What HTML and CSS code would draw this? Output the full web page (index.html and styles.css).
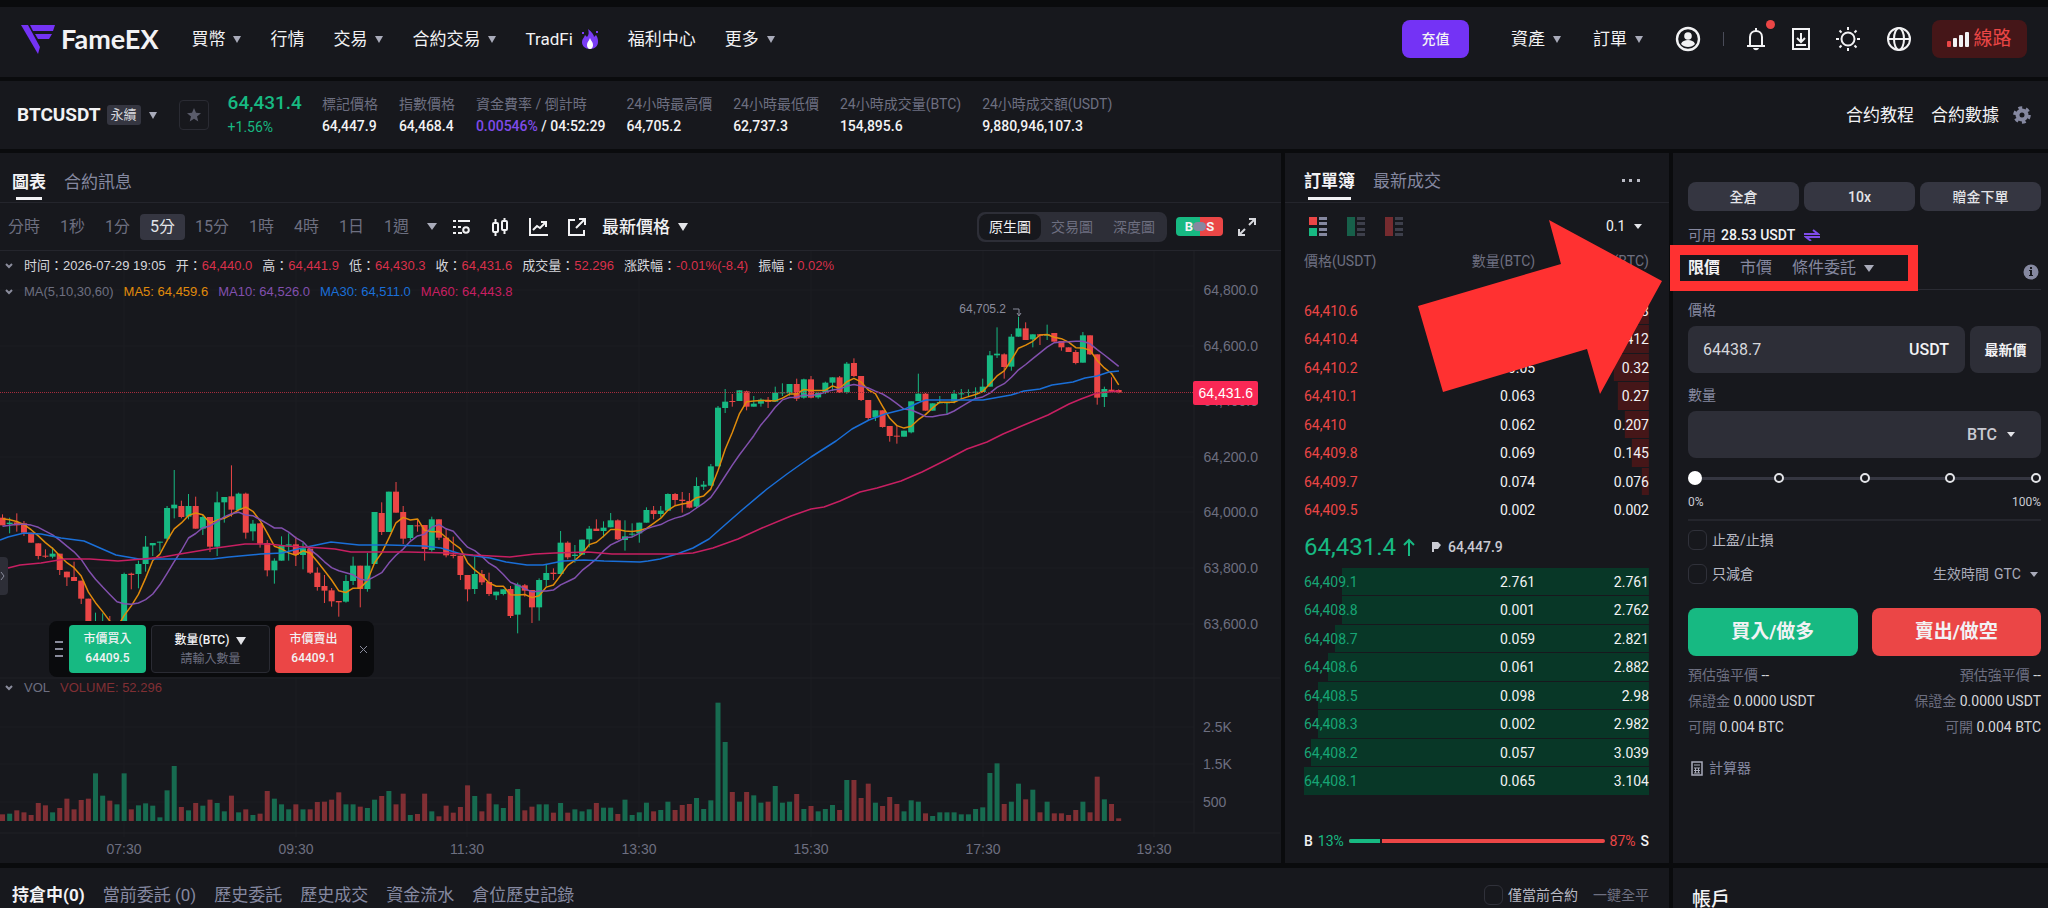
FILE: index.html
```html
<!DOCTYPE html>
<html lang="zh-Hant">

<head>
    <meta charset="UTF-8">
    <meta name="viewport" content="width=device-width,initial-scale=1">
    <title>BTCUSDT 永續 | FameEX</title>
    <link rel="stylesheet" href="styles.css">
</head>

<body>
    <header class="header">
        <a class="logo" href="#">
            <svg width="34" height="30" viewBox="0 0 34 30" fill="#7433f5">
                <path d="M0 1h7l12 22-2 7z" />
                <path d="M9 1h25l-2 6H12z" />
                <path d="M14 10h17l-3 5H17z" />
            </svg>
            <span>FameEX</span>
        </a>
        <nav class="main_nav">
            <a href="#">買幣<i class="caret"></i></a>
            <a href="#">行情</a>
            <a href="#">交易<i class="caret"></i></a>
            <a href="#">合約交易<i class="caret"></i></a>
            <a href="#">TradFi
                <svg width="18" height="20" viewBox="0 0 18 20">
                    <path fill="#7a3cf5" d="M7 0c4 3 6 6 6 8l2-2c2 3 2 5 2 7 0 4-3 7-8 7s-8-3-8-7c0-3 2-4 3-7l2 2c2-2 2-5 1-8z" />
                    <path fill="#fff" d="M9 9c1 3 3 4 3 7 0 2-1 4-3 4s-3-2-3-4c0-3 2-4 3-7z" />
                    <path fill="#7a3cf5" d="M15 2h2v2h-2zM1 3h2v2H1z" />
                </svg>
            </a>
            <a href="#">福利中心</a>
            <a href="#">更多<i class="caret"></i></a>
        </nav>
        <div class="header_right">
            <button class="btn_deposit">充值</button>
            <a class="menu" href="#">資產<i class="caret"></i></a>
            <a class="menu" href="#">訂單<i class="caret"></i></a>
            <div class="header_icons">
                <svg width="26" height="26" viewBox="0 0 26 26" fill="none" stroke="#f2f2f4" stroke-width="2.4">
                    <circle cx="13" cy="13" r="11" />
                    <circle cx="13" cy="10" r="3.8" fill="#f2f2f4" stroke="none" />
                    <path d="M6 18c1-3 4-4 7-4s6 1 7 4c-3 4-11 4-14 0z" fill="#f2f2f4" stroke="none" />
                </svg>
                <i class="split"></i>
                <span class="bell">
                    <svg width="20" height="24" viewBox="0 0 20 24" fill="none" stroke="#f2f2f4" stroke-width="2">
                        <path d="M1 19h18M4 19v-9c0-4 3-6 6-6s6 2 6 6v9M10 1v3" />
                        <path d="M7 21h6c-1 3-5 3-6 0z" fill="#f2f2f4" stroke="none" />
                    </svg>
                    <i class="dot"></i>
                </span>
                <svg width="18" height="24" viewBox="0 0 18 24" fill="none" stroke="#f2f2f4" stroke-width="2">
                    <path d="M1 2h16v20H1zM9 6v9M5 11l4 4 4-4M4 18h10" />
                </svg>
                <svg width="24" height="24" viewBox="0 0 24 24" fill="none" stroke="#f2f2f4" stroke-width="2">
                    <circle cx="12" cy="12" r="6.5" />
                    <path d="M12 0v3M12 21v3M0 12h3M21 12h3M3.5 3.5l2 2M18.500 18.500l2 2M3.500 20.500l2-2M18.500 5.500l2-2" />
                </svg>
                <svg width="26" height="26" viewBox="0 0 26 26" fill="none" stroke="#f2f2f4" stroke-width="2">
                    <circle cx="13" cy="13" r="11" />
                    <ellipse cx="13" cy="13" rx="5" ry="11" />
                    <path d="M2 13h22" />
                </svg>
            </div>
            <button class="btn_line">
                <svg width="23" height="16" viewBox="0 0 23 16" fill="#f2f2f4">
                    <rect x="0" y="10" width="4" height="6" rx="1" fill="#eb4646" />
                    <rect x="6" y="7" width="4" height="9" rx="1" />
                    <rect x="12" y="4" width="4" height="12" rx="1" />
                    <rect x="18" y="1" width="4" height="15" rx="1" />
                </svg>
                線路
            </button>
        </div>
    </header>

    <section class="ticker">
        <div class="symbol">
            <b>BTCUSDT</b>
            <span class="tag">永續</span>
            <i class="caret"></i>
            <button class="btn_star" aria-label="收藏">
                <svg width="14" height="14" viewBox="0 0 14 14" fill="#5a5c6b">
                    <path d="M7 0l2 4.700 5 .5-4 3.300 1.300 5L7 10.800l-4.300 2.700 1.300-5-4-3.300 5-.5z" />
                </svg>
            </button>
        </div>
        <div class="last_price">
            <b>64,431.4</b>
            <span>+1.56%</span>
        </div>
        <dl class="stats">
            <div><dt>標記價格</dt><dd>64,447.9</dd></div>
            <div><dt>指數價格</dt><dd>64,468.4</dd></div>
            <div><dt>資金費率 / 倒計時</dt><dd><em>0.00546%</em> / 04:52:29</dd></div>
            <div><dt>24小時最高價</dt><dd>64,705.2</dd></div>
            <div><dt>24小時最低價</dt><dd>62,737.3</dd></div>
            <div><dt>24小時成交量(BTC)</dt><dd>154,895.6</dd></div>
            <div><dt>24小時成交額(USDT)</dt><dd>9,880,946,107.3</dd></div>
        </dl>
        <div class="ticker_right">
            <a href="#">合约教程</a>
            <a href="#">合約數據</a>
            <svg width="18" height="18" viewBox="0 0 18 18" fill="none" stroke="#8588a0">
                <circle cx="9" cy="9" r="4.500" stroke-width="4" />
                <circle cx="9" cy="9" r="7.300" stroke-width="3" stroke-dasharray="3.820 3.820" />
            </svg>
        </div>
    </section>

    <main class="main">
        <section class="panel chart">
            <div class="tabs">
                <button class="on">圖表</button>
                <button>合約訊息</button>
            </div>
            <div class="toolbar">
                <div class="periods">
                    <button>分時</button>
                    <button>1秒</button>
                    <button>1分</button>
                    <button class="on">5分</button>
                    <button>15分</button>
                    <button>1時</button>
                    <button>4時</button>
                    <button>1日</button>
                    <button>1週</button>
                </div>
                <i class="caret big"></i>
                <div class="tools">
                    <svg width="18" height="16" viewBox="0 0 18 16" fill="none" stroke="#f2f2f4" stroke-width="2">
                        <path d="M0 2h3M5 2h12M0 8h3M5 8h3M0 14h3M5 14h4" />
                        <circle cx="13" cy="11" r="2.800" />
                    </svg>
                    <svg width="18" height="18" viewBox="0 0 18 18" fill="none" stroke="#f2f2f4" stroke-width="2">
                        <path d="M4.500 1v4M4.500 14v4M13.500 0v3M13.500 12v4" />
                        <rect x="2" y="5" width="5" height="9" rx="1" />
                        <rect x="11" y="3" width="5" height="9" rx="1" />
                    </svg>
                    <svg width="19" height="18" viewBox="0 0 19 18" fill="none" stroke="#f2f2f4" stroke-width="2">
                        <path d="M1 0v17h18M4 12l4-4 3 2 6-6M12 4h5v5" />
                    </svg>
                    <svg width="18" height="18" viewBox="0 0 18 18" fill="none" stroke="#f2f2f4" stroke-width="2">
                        <path d="M7 2H1v15h15v-5M11 1h6v6M17 1L8 10" />
                    </svg>
                </div>
                <label class="pick strong">
                    <select aria-label="價格類型">
                        <option>最新價格</option>
                    </select>
                    <i class="caret light"></i>
                </label>
                <div class="seg">
                    <button class="on">原生圖</button>
                    <button>交易圖</button>
                    <button>深度圖</button>
                </div>
                <button class="bs" aria-label="買賣點"><b>B</b><i></i><b>S</b></button>
                <svg width="18" height="18" viewBox="0 0 18 18" fill="none" stroke="#d6d7dc" stroke-width="2">
                    <path d="M11 1h6v6M17 1l-6 6M1 11v6h6M1 17l6-6" />
                </svg>
            </div>
            <div class="plot">
                <svg class="kline" id="kline" viewBox="0 0 1280 612" preserveAspectRatio="xMinYMin meet"></svg>
                <div class="legend">
                    <p>
                        <svg width="9" height="6" viewBox="0 0 9 6"><path d="M1 1l3 3 3-3" /></svg>
                        <span>时间：2026-07-29 19:05</span>
                        <span>开：<em>64,440.0</em></span>
                        <span>高：<em>64,441.9</em></span>
                        <span>低：<em>64,430.3</em></span>
                        <span>收：<em>64,431.6</em></span>
                        <span>成交量：<em>52.296</em></span>
                        <span>涨跌幅：<em>-0.01%(-8.4)</em></span>
                        <span>振幅：<em>0.02%</em></span>
                    </p>
                    <p>
                        <svg width="9" height="6" viewBox="0 0 9 6"><path d="M1 1l3 3 3-3" /></svg>
                        <span class="muted">MA(5,10,30,60)</span>
                        <span class="ma5">MA5: 64,459.6</span>
                        <span class="ma10">MA10: 64,526.0</span>
                        <span class="ma30">MA30: 64,511.0</span>
                        <span class="ma60">MA60: 64,443.8</span>
                    </p>
                </div>
                <div class="legend vol">
                    <p>
                        <svg width="9" height="6" viewBox="0 0 9 6"><path d="M1 1l3 3 3-3" /></svg>
                        <span class="muted">VOL</span>
                        <span class="volume">VOLUME: 52.296</span>
                    </p>
                </div>
                <button class="drawer" aria-label="展開">
                    <svg width="6" height="10" viewBox="0 0 6 10" fill="none" stroke="#8a8c9c"><path d="M1 1l3 4-3 4" /></svg>
                </button>
                <div class="quick">
                    <i class="grip"></i>
                    <button class="buy">市價買入<span>64409.5</span></button>
                    <div class="quick_qty">
                        <label for="quick_qty">數量(BTC)<i class="caret light"></i></label>
                        <input id="quick_qty" type="text" placeholder="請輸入數量">
                    </div>
                    <button class="sell">市價賣出<span>64409.1</span></button>
                    <button class="close" aria-label="關閉">
                        <svg width="9" height="9" viewBox="0 0 9 9" stroke="#8a8c9c"><path d="M1 1l7 7M8 1L1 8" /></svg>
                    </button>
                </div>
            </div>
        </section>

        <section class="panel book">
            <div class="tabs">
                <button class="on">訂單簿</button>
                <button>最新成交</button>
                <svg class="more" width="18" height="4" viewBox="0 0 18 4" fill="#b9bac4">
                    <path d="M0 0h3v3H0zM7 0h3v3H7zM15 0h3v3h-3z" />
                </svg>
            </div>
            <div class="book_bar">
                <svg width="18" height="19" viewBox="0 0 18 19">
                    <path fill="#eb4646" d="M0 0h8v8H0z" />
                    <path fill="#17b982" d="M0 11h8v8H0z" />
                    <path fill="#8588a0" d="M10 0h8v3h-8zM10 5h8v3h-8zM10 11h8v3h-8zM10 16h8v3h-8z" />
                </svg>
                <svg width="18" height="19" viewBox="0 0 18 19">
                    <path fill="#17604a" d="M0 0h8v19H0z" />
                    <path fill="#3d3f4b" d="M10 0h8v3h-8zM10 5h8v3h-8zM10 11h8v3h-8zM10 16h8v3h-8z" />
                </svg>
                <svg width="18" height="19" viewBox="0 0 18 19">
                    <path fill="#762b2f" d="M0 0h8v19H0z" />
                    <path fill="#3d3f4b" d="M10 0h8v3h-8zM10 5h8v3h-8zM10 11h8v3h-8zM10 16h8v3h-8z" />
                </svg>
                <label class="pick">
                    <select aria-label="深度">
                        <option>0.1</option>
                    </select>
                    <i class="caret light small"></i>
                </label>
            </div>
            <table class="depth asks">
                <thead>
                    <tr><th>價格(USDT)</th><th>數量(BTC)</th><th>合計(BTC)</th></tr>
                </thead>
                <tbody>
                    <tr style="--w:13%"><td>64,410.6</td><td>0.001</td><td>0.413</td></tr>
                    <tr style="--w:13%"><td>64,410.4</td><td>0.092</td><td>0.412</td></tr>
                    <tr style="--w:10%"><td>64,410.2</td><td>0.05</td><td>0.32</td></tr>
                    <tr style="--w:9%"><td>64,410.1</td><td>0.063</td><td>0.27</td></tr>
                    <tr style="--w:7%"><td>64,410</td><td>0.062</td><td>0.207</td></tr>
                    <tr style="--w:5%"><td>64,409.8</td><td>0.069</td><td>0.145</td></tr>
                    <tr style="--w:2%"><td>64,409.7</td><td>0.074</td><td>0.076</td></tr>
                    <tr style="--w:0%"><td>64,409.5</td><td>0.002</td><td>0.002</td></tr>
                </tbody>
            </table>
            <div class="book_price">
                <b>64,431.4</b>
                <svg width="12" height="18" viewBox="0 0 12 18" fill="none" stroke="#17b982" stroke-width="2"><path d="M6 18V2M1 7l5-5 5 5" /></svg>
                <svg class="flag" width="9" height="10" viewBox="0 0 9 10" fill="#c9cad2"><path d="M0 0h6l3 3-3 4H2v3H0z" /></svg>
                <span>64,447.9</span>
            </div>
            <table class="depth bids">
                <tbody>
                    <tr style="--w:89%"><td>64,409.1</td><td>2.761</td><td>2.761</td></tr>
                    <tr style="--w:89%"><td>64,408.8</td><td>0.001</td><td>2.762</td></tr>
                    <tr style="--w:91%"><td>64,408.7</td><td>0.059</td><td>2.821</td></tr>
                    <tr style="--w:93%"><td>64,408.6</td><td>0.061</td><td>2.882</td></tr>
                    <tr style="--w:96%"><td>64,408.5</td><td>0.098</td><td>2.98</td></tr>
                    <tr style="--w:96%"><td>64,408.3</td><td>0.002</td><td>2.982</td></tr>
                    <tr style="--w:98%"><td>64,408.2</td><td>0.057</td><td>3.039</td></tr>
                    <tr style="--w:100%"><td>64,408.1</td><td>0.065</td><td>3.104</td></tr>
                </tbody>
            </table>
            <div class="ratio">
                <b>B</b>
                <span class="up">13%</span>
                <div class="ratio_bar"><i style="width:13%"></i></div>
                <span class="down">87%</span>
                <b>S</b>
            </div>
        </section>

        <section class="panel order">
            <div class="modes">
                <button>全倉</button>
                <button>10x</button>
                <button>贈金下單</button>
            </div>
            <p class="avail">可用 <b>28.53 USDT</b>
                <svg width="16" height="12" viewBox="0 0 16 12" fill="none" stroke="#7f4bea" stroke-width="2"><path d="M0 5h14l-5-4M16 8H2l5 4" /></svg>
            </p>
            <div class="types">
                <button class="on">限價</button>
                <button>市價</button>
                <button>條件委託<i class="caret big"></i></button>
                <svg width="16" height="16" viewBox="0 0 16 16">
                    <circle cx="8" cy="8" r="7.500" fill="#8588a0" />
                    <path fill="#17181d" d="M7 3h2v2H7zM6 6h3v5h1v1H6v-1h1V7H6z" />
                </svg>
            </div>
            <label class="field_name" for="price">價格</label>
            <div class="price_row">
                <div class="field">
                    <input id="price" type="text" value="64438.7">
                    <b>USDT</b>
                </div>
                <button>最新價</button>
            </div>
            <label class="field_name" for="amount">數量</label>
            <div class="field">
                <input id="amount" type="text">
                <label class="pick">
                    <select aria-label="單位">
                        <option>BTC</option>
                    </select>
                    <i class="caret light small"></i>
                </label>
            </div>
            <div class="slider">
                <input type="range" min="0" max="100" value="0" aria-label="倉位比例">
                <div class="marks"><i></i><i></i><i></i><i></i><i></i></div>
            </div>
            <div class="slider_text"><span>0%</span><span>100%</span></div>
            <div class="options">
                <label class="check"><input type="checkbox">止盈/止損</label>
                <div class="options_row">
                    <label class="check"><input type="checkbox">只減倉</label>
                    <label class="pick tif">生效時間
                        <select>
                            <option>GTC</option>
                        </select>
                        <i class="caret small"></i>
                    </label>
                </div>
            </div>
            <div class="submit">
                <button class="buy">買入/做多</button>
                <button class="sell">賣出/做空</button>
            </div>
            <div class="cost">
                <div>
                    <p>預估強平價 <span>--</span></p>
                    <p>保證金 <span>0.0000 USDT</span></p>
                    <p>可開 <span>0.004 BTC</span></p>
                </div>
                <div>
                    <p>預估強平價 <span>--</span></p>
                    <p>保證金 <span>0.0000 USDT</span></p>
                    <p>可開 <span>0.004 BTC</span></p>
                </div>
            </div>
            <a class="calc" href="#">
                <svg width="12" height="15" viewBox="0 0 12 15" fill="none" stroke="#a9abba">
                    <path stroke-width="1.500" d="M1 1h10v13H1z" />
                    <path d="M3 4h6M3 7h6M3 9.500h6M3 12h6M4.500 7v5M7.500 7v5" />
                </svg>
                計算器
            </a>
        </section>

        <section class="panel positions">
            <div class="tabs">
                <button class="on">持倉中(0)</button>
                <button>當前委託 (0)</button>
                <button>歷史委託</button>
                <button>歷史成交</button>
                <button>資金流水</button>
                <button>倉位歷史記錄</button>
            </div>
            <label class="check"><input type="checkbox">僅當前合約</label>
            <a href="#">一鍵全平</a>
        </section>

        <section class="panel account">
            <h2>帳戶</h2>
        </section>

        <!-- guide marks over the order type tabs -->
        <div class="guide_box"></div>
        <svg class="guide_arrow" width="245" height="175" viewBox="0 0 245 175">
            <path fill="#ff3131" d="M131 0l113 61-62 113-13-45L25 172 0 86l143-42z" />
        </svg>
    </main>
    <script src="chart.js"></script>
</body>

</html>
```

FILE: styles.css
```css
* {
    margin: 0;
    padding: 0;
    box-sizing: border-box;
}

html {
    font-size: 14px;
    font-family: Roboto, "Noto Sans CJK TC", sans-serif;
    background: #0a0b0d;
    color: #f2f2f4;
}

body {
    height: 100vh;
    padding-top: 7px;
    overflow: hidden;
    line-height: 20px;
}

a {
    color: inherit;
    text-decoration: none;
}

button,
input,
select {
    border: 0;
    background: none;
    color: inherit;
    font: inherit;
    outline: none;
    appearance: none;
}

button {
    cursor: pointer;
    white-space: nowrap;
}

svg {
    display: block;
    flex: none;
}

b {
    font-weight: 500;
}

em {
    font-style: normal;
}

.caret {
    display: inline-block;
    flex: none;
    border: 0 solid transparent;
    border-width: 7px 4px 0;
    border-top-color: #a9abba;
}

.caret.big {
    border-width: 7px 5px 0;
}

.caret.small {
    border-width: 5px 4px 0;
}

.caret.light {
    border-top-color: #e3e4e8;
}

.pick {
    display: flex;
    align-items: center;
    gap: 8px;
}

/* header */

.header {
    height: 70px;
    margin-bottom: 4px;
    padding: 0 21px 6px;
    background: #17181d;
    display: flex;
    align-items: center;
    font-size: 17px;
}

.logo {
    display: flex;
    align-items: center;
    gap: 6px;
    font: 700 27px/30px Lato, sans-serif;
    margin-right: 33px;
}

.main_nav {
    display: flex;
    gap: 29px;
    white-space: nowrap;
}

.main_nav a,
.menu {
    display: flex;
    align-items: center;
    gap: 8px;
}

.header_right {
    display: flex;
    align-items: center;
    margin-left: auto;
    white-space: nowrap;
}

.btn_deposit {
    width: 67px;
    height: 38px;
    border-radius: 8px;
    background: #7433f5;
    font-size: 14px;
    font-weight: 500;
    margin-right: 42px;
}

.menu {
    margin-right: 32px;
}

.header_icons {
    display: flex;
    align-items: center;
    gap: 26px;
    margin-right: 20px;
}

.split {
    width: 1px;
    height: 14px;
    background: #4a4c59;
    margin: 0 -4px;
}

.bell {
    position: relative;
}

.dot {
    position: absolute;
    right: -9px;
    top: -7px;
    width: 9px;
    height: 9px;
    border-radius: 50%;
    background: #eb4646;
}

.btn_line {
    display: flex;
    align-items: center;
    justify-content: center;
    gap: 3px;
    width: 95px;
    height: 38px;
    border-radius: 8px;
    background: #451618;
    color: #eb4646;
    font-size: 19px;
}

/* ticker */

.ticker {
    height: 68px;
    margin-bottom: 4px;
    padding: 0 17px;
    background: #17181d;
    display: flex;
    align-items: center;
    white-space: nowrap;
}

.symbol {
    display: flex;
    align-items: center;
    gap: 6px;
    font-size: 19px;
}

.symbol b {
    font-weight: 700;
}

.symbol .caret {
    margin: 0 2px;
}

.tag {
    padding: 0 4px;
    border-radius: 3px;
    background: #353641;
    color: #d6d7dc;
    font-size: 13px;
}

.btn_star {
    display: flex;
    align-items: center;
    justify-content: center;
    width: 30px;
    height: 30px;
    margin-left: 14px;
    border: 1px solid #2a2b33;
    border-radius: 4px;
}

.last_price {
    margin: 0 20px 0 19px;
    color: #17b982;
    line-height: 25px;
}

.last_price b {
    display: block;
    font-size: 19px;
}

.stats {
    display: flex;
    gap: 21px;
    line-height: 22px;
}

.stats dt {
    color: #6d6f80;
}

.stats dd {
    font-weight: 500;
}

.stats em {
    color: #7f4bea;
}

.ticker_right {
    display: flex;
    align-items: center;
    gap: 17px;
    margin-left: auto;
    font-size: 17px;
}

.ticker_right svg {
    margin-left: -3px;
}

/* main grid */

.main {
    position: relative;
    display: grid;
    grid-template-columns: 1fr 384px 375px;
    gap: 5px 4px;
}

.panel {
    background: #17181d;
    min-width: 0;
}

.tabs {
    display: flex;
    align-items: center;
    gap: 18px;
    height: 50px;
    padding: 8px 12px 0;
    border-bottom: 1px solid #24252c;
    font-size: 17px;
    color: #8588a0;
}

.tabs .on {
    color: #f2f2f4;
    font-weight: 700;
}

.chart .tabs .on,
.book .tabs .on {
    position: relative;
}

.chart .tabs .on::after,
.book .tabs .on::after {
    content: "";
    position: absolute;
    left: 4px;
    right: 4px;
    bottom: -8px;
    height: 3px;
    background: #f2f2f4;
}

/* chart */

.toolbar {
    display: flex;
    align-items: center;
    height: 48px;
    padding-right: 25px;
    border-bottom: 1px solid #24252c;
    font-size: 16px;
}

.periods {
    display: flex;
    margin-left: -2px;
    margin-right: 8px;
    color: #6d6f80;
}

.periods button {
    height: 26px;
    padding: 0 10px;
    border-radius: 4px;
}

.periods .on {
    background: #353641;
    color: #e3e4e8;
}

.tools {
    display: flex;
    align-items: center;
    gap: 20px;
    margin: 0 16px;
}

.pick.strong {
    font-size: 17px;
    font-weight: 500;
}

.pick.strong .caret {
    border-width: 8px 5px 0;
}

.seg {
    display: flex;
    height: 30px;
    margin-left: auto;
    border: 2px solid #2d2e37;
    border-radius: 8px;
    background: #2d2e37;
    font-size: 14px;
    color: #6d6f80;
}

.seg button {
    padding: 0 10px;
    border-radius: 8px;
}

.seg .on {
    background: #17181d;
    color: #f2f2f4;
}

.bs {
    display: flex;
    align-items: center;
    justify-content: center;
    width: 47px;
    height: 19px;
    margin: 0 15px 0 9px;
    border-radius: 4px;
    background: linear-gradient(to right, #17b982 50%, #eb4646 0);
    font-size: 13px;
}

.bs b {
    font-weight: 700;
}

.bs i {
    width: 13px;
    height: 9px;
    border-radius: 5px;
    background: #8588a0;
}

.plot {
    position: relative;
    height: 612px;
    overflow: hidden;
}

.kline {
    width: 100%;
    height: 612px;
    font-family: "Liberation Sans", sans-serif;
    font-size: 14px;
}

.legend {
    position: absolute;
    left: 5px;
    top: 2px;
    font: 13px/26px "Liberation Sans", "Noto Sans CJK SC", sans-serif;
    color: #d6d7dc;
    white-space: nowrap;
}

.legend.vol {
    top: 424px;
}

.legend p {
    display: flex;
    align-items: center;
    gap: 10px;
}

.legend svg {
    fill: none;
    stroke: #8a8c9c;
    stroke-width: 2;
}

.legend em {
    color: #d9304a;
}

.legend .muted {
    color: #6d6f80;
}

.legend .ma5 {
    color: #e08b0b;
}

.legend .ma10 {
    color: #8250ae;
}

.legend .ma30 {
    color: #1a6fd8;
}

.legend .ma60 {
    color: #c71f62;
}

.legend .volume {
    color: #802f34;
}

.drawer {
    position: absolute;
    left: 0;
    top: 306px;
    width: 8px;
    height: 38px;
    border-radius: 0 4px 4px 0;
    background: #2d2e37;
}

.quick {
    position: absolute;
    left: 49px;
    top: 370px;
    display: flex;
    align-items: center;
    gap: 5px;
    height: 56px;
    padding: 0 6px;
    border-radius: 8px;
    background: #0a0b0d;
    font-size: 12px;
    line-height: 19px;
}

.grip {
    width: 8px;
    height: 16px;
    margin-right: 1px;
    background: repeating-linear-gradient(#8a8c9c 0 2px, transparent 2px 7px);
}

.quick .buy,
.quick .sell {
    width: 77px;
    height: 48px;
    border-radius: 4px;
    font-weight: 500;
}

.quick .buy span,
.quick .sell span {
    display: block;
}

.buy {
    background: #17b982;
}

.sell {
    background: #eb4646;
}

.quick_qty {
    width: 119px;
    height: 48px;
    padding-top: 5px;
    border: 1px solid #2a2b33;
    border-radius: 4px;
    background: #141519;
    text-align: center;
}

.quick_qty label {
    display: flex;
    align-items: center;
    justify-content: center;
    gap: 7px;
    font-weight: 500;
}

.quick_qty .caret {
    border-width: 8px 5px 0;
}

.quick_qty input {
    display: block;
    width: 100%;
    height: 19px;
    text-align: center;
}

.quick_qty input::placeholder {
    color: #6d6f80;
}

.close {
    margin-left: 2px;
}

/* order book */

.book {
    padding: 0 20px 0 19px;
}

.book .tabs {
    margin: 0 -20px 0 -19px;
    padding: 6px 29px 0 19px;
}

.book .tabs .on::after {
    bottom: -9px;
}

.more {
    margin-left: auto;
}

.book_bar {
    display: flex;
    align-items: center;
    gap: 20px;
    height: 46px;
    padding: 0 7px 0 5px;
}

.book_bar .pick {
    margin-left: auto;
}

.depth {
    width: 100%;
    height: 228px;
    border-collapse: collapse;
    table-layout: fixed;
    text-align: right;
    line-height: 18px;
}

.depth.asks {
    height: 276px;
}

.depth th {
    height: 48px;
    padding-bottom: 24px;
    color: #6d6f80;
    font-weight: 400;
}

.depth th:first-child,
.depth td:first-child {
    width: 34%;
    text-align: left;
}

.depth tbody tr {
    border-bottom: 1px solid #17181d;
}

.asks tbody tr {
    background: linear-gradient(to left, #451618 var(--w), transparent 0);
}

.bids tbody tr {
    background: linear-gradient(to left, #083727 var(--w), transparent 0);
}

.asks td:first-child {
    color: #eb4646;
}

.bids td:first-child {
    color: #17a575;
}

.book_price {
    display: flex;
    align-items: center;
    gap: 7px;
    height: 43px;
    color: #17b982;
}

.book_price b {
    font-size: 24px;
    font-weight: 400;
}

.book_price span {
    color: #c9cad2;
    font-weight: 500;
}

.flag {
    margin-left: 10px;
}

.ratio {
    display: flex;
    align-items: center;
    gap: 5px;
    margin-top: 35px;
}

.ratio_bar {
    flex: 1;
    height: 4px;
    border-radius: 2px;
    background: #eb4646;
    overflow: hidden;
}

.ratio_bar i {
    display: block;
    height: 4px;
    background: #17b982;
    border-right: 2px solid #17181d;
}

.up {
    color: #17b982;
}

.down {
    color: #eb4646;
}

/* order form */

.order {
    padding: 29px 7px 0 15px;
}

.modes {
    display: grid;
    grid-template-columns: 11fr 11fr 12fr;
    gap: 5px;
}

.modes button {
    height: 29px;
    border-radius: 8px;
    background: #353641;
    color: #e3e4e8;
    font-weight: 500;
}

.avail {
    display: flex;
    align-items: center;
    gap: 5px;
    margin-top: 14px;
    color: #8588a0;
}

.avail b {
    color: #f2f2f4;
    margin-right: 4px;
}

.types {
    display: flex;
    align-items: center;
    gap: 20px;
    height: 45px;
    padding-top: 2px;
    border-bottom: 1px solid #2a2b33;
    font-size: 16px;
    color: #8588a0;
}

.types .on {
    color: #f2f2f4;
    font-weight: 700;
}

.types button {
    display: flex;
    align-items: center;
    gap: 8px;
}

.types svg {
    margin: 8px 2px 0 auto;
}

.field_name {
    display: block;
    margin-top: 10px;
    margin-bottom: 6px;
    color: #8588a0;
}

.price_row {
    display: flex;
    gap: 5px;
    margin-bottom: 12px;
}

.field {
    flex: 1;
    display: flex;
    align-items: center;
    height: 47px;
    padding: 0 16px 0 15px;
    border-radius: 8px;
    background: #2d2e37;
    font-size: 16px;
}

.field input {
    flex: 1;
    min-width: 0;
    color: #d6d7dc;
}

.field .pick {
    gap: 10px;
    padding-right: 10px;
    font-weight: 500;
    color: #c9cad2;
}

.price_row button {
    width: 71px;
    border-radius: 8px;
    background: #2d2e37;
    font-weight: 700;
}

.slider {
    position: relative;
    height: 14px;
    margin-top: 13px;
}

.slider input {
    display: block;
    width: 100%;
    height: 14px;
    background: linear-gradient(#353641, #353641) center / 100% 3px no-repeat;
}

.slider input::-webkit-slider-thumb {
    appearance: none;
    position: relative;
    z-index: 1;
    width: 14px;
    height: 14px;
    border-radius: 50%;
    background: #fff;
}

.marks {
    position: absolute;
    left: 0;
    right: 0;
    top: 2px;
    display: flex;
    justify-content: space-between;
    pointer-events: none;
}

.marks i {
    width: 10px;
    height: 10px;
    border: 2px solid #e3e4e8;
    border-radius: 50%;
    background: #17181d;
}

.marks i:first-child {
    visibility: hidden;
}

.slider_text {
    display: flex;
    justify-content: space-between;
    padding: 7px 0;
    border-bottom: 2px solid #24252c;
    font-size: 12px;
    color: #c9cad2;
}

.options {
    padding-top: 9px;
    color: #a9abba;
}

.check {
    display: flex;
    align-items: center;
    gap: 5px;
    color: #b9bac4;
}

.check input {
    width: 19px;
    height: 20px;
    border: 1px solid #30313a;
    border-radius: 6px;
}

.options_row {
    display: flex;
    justify-content: space-between;
    margin-top: 14px;
}

.tif {
    gap: 5px;
    padding-right: 3px;
}

.tif .caret {
    margin-left: 4px;
}

.submit {
    display: flex;
    gap: 14px;
    margin: 24px 0 6px;
}

.submit button {
    flex: 1;
    height: 48px;
    border-radius: 8px;
    font-size: 19px;
    font-weight: 700;
}

.cost {
    display: flex;
    justify-content: space-between;
    line-height: 26px;
    color: #6d6f80;
}

.cost div:last-child {
    text-align: right;
}

.cost span {
    color: #d6d7dc;
}

.calc {
    display: flex;
    align-items: center;
    gap: 6px;
    margin: 18px 3px;
    color: #8588a0;
}

/* bottom */

.positions {
    grid-column: 1 / 3;
    display: flex;
    align-items: center;
    gap: 15px;
    height: 60px;
    padding: 0 20px 6px 0;
}

.positions .tabs {
    flex: 1;
    border: 0;
    padding-top: 0;
}

.positions > a {
    color: #6d6f80;
}

.account {
    padding: 18px 19px;
}

.account h2 {
    font-size: 19px;
    line-height: 28px;
    font-weight: 500;
}

.guide_box {
    position: absolute;
    right: 130px;
    top: 92px;
    width: 248px;
    height: 46px;
    border: 10px solid #ff3131;
}

.guide_arrow {
    position: absolute;
    right: 385px;
    top: 67px;
}
```

FILE: chart.js
```js
var UP = '#17b982';
var DOWN = '#eb4646';
var STEP = 7.155;
var FIRST_X = 2.5;
var VOL_BASE = 570;

// each row: direction, body top, body bottom, high, low, volume
// values are thirds of a pixel measured down from the block's base line
var blocks = [{
    base: 209,
    rows: `R 173 196 163 196 20|G 188 192 173 220 22|R 187 196 160 215 32|R 190 218 183 228 26|R 218 248 218 248 18
R 250 288 250 298 54|R 287 289 268 294 47|G 281 290 262 295 26|R 281 330 281 345 39|R 335 352 335 378 67
R 351 363 305 363 35|R 362 416 362 432 63|R 416 520 416 520 67|G 490 520 458 520 143|G 485 500 460 500 76
R 485 505 468 505 61|G 512 515 500 520 50|G 342 520 338 520 143|R 341 345 338 388 35|G 312 342 302 385 47
G 260 312 228 335 53|G 249 256 249 288 46|G 245 248 245 275 11|G 144 236 138 240 92|G 134 145 30 175 165
R 138 171 122 175 42|G 138 170 102 178 32|R 138 206 110 206 54|G 171 206 165 225 46|R 171 260 171 276 64
G 127 260 95 288 54|G 111 127 111 188 29|R 109 149 16 170 76|G 101 150 98 150 26|R 101 218 98 236 35
G 191 214 180 242 18|R 190 251 190 263 22|R 249 331 240 349 90|G 302 331 295 371 67|G 257 302 229 302 50
G 253 257 220 302 35|R 253 285 230 318 50|G 265 285 248 328 35|R 266 338 266 342 35|R 338 381 322 392 57
R 378 392 345 429 58|R 391 424 384 440 64|R 423 427 423 470 86|G 363 425 345 428 50|G 317 363 290 375 50
R 317 387 317 442 43|G 317 387 279 395 39|G 156 312 156 312 64|R 159 216 127 225 75|G 95 216 95 216 90
R 95 158 66 158 50|R 156 236 138 252 82|G 195 234 195 240 18|R 196 199 178 215 21|R 195 267 195 302 82
G 178 270 170 275 29|R 178 233 178 240 14|R 233 286 205 292 46|R 284 288 230 295 25|R 287 345 287 360 42
R 345 388 345 424 107|G 342 387 290 402 75|R 342 367 330 375 29|R 366 402 338 408 82|G 395 406 395 420 50
G 388 402 388 406 39|R 387 468 378 474 75|G 374 464 368 520 96|R 376 392 372 410 32|R 390 442 390 489 43
G 360 442 355 482 50|G 339 360 313 380 50|R 338 342 325 360 25|G 248 342 213 342 54|R 248 292 244 298 25
G 284 288 255 308 35|G 239 284 239 284 29|G 206 238 198 262 35|R 206 213 178 213 54|G 203 213 184 232 40
G 181 202 159 202 40|R 181 238 178 240 21|G 229 240 181 272 64|G 221 224 190 232 18|G 188 220 188 248 26`
}, {
    base: 39,
    rows: `G 660 698 652 698 55|R 661 672 648 688 29|G 662 672 648 682 33|G 612 662 610 662 58|R 612 630 609 645 33
R 629 633 606 668 48|R 633 653 609 655 51|G 588 650 562 654 69|G 584 590 573 600 36|G 529 587 522 587 62
G 353 529 348 529 355|G 335 354 297 369 237|R 333 336 312 350 87|G 301 333 301 333 58|R 304 350 302 361 87
G 341 350 318 350 77|G 329 341 325 350 55|R 331 336 321 354 58|G 308 335 290 335 105|G 307 310 280 318 55
G 282 310 282 317 58|R 282 326 266 333 81|G 268 323 266 326 36|R 268 323 258 325 45|G 308 322 308 326 29
G 278 308 275 312 36|G 262 278 262 303 48|R 262 307 258 309 33|G 221 307 216 311 123|R 219 258 205 261 123
R 258 330 258 333 69|R 330 384 330 390 112|G 361 382 361 393 55|R 361 411 361 413 45|R 408 438 408 455 72
R 437 440 405 461 51|G 422 440 422 440 29|G 334 427 334 430 62|G 311 333 251 333 58|R 311 362 309 362 23
G 340 362 340 362 15|G 336 340 318 340 26|G 336 340 336 373 26|G 311 334 300 340 26|G 310 313 297 330 20
G 306 309 298 320 20|G 305 309 292 325 36|G 290 306 266 306 41|G 196 290 183 290 144|G 191 196 112 204 173
R 193 231 190 266 51|G 140 230 132 242 58|G 115 140 80 140 112|R 115 150 97 150 65|G 133 148 133 172 94
R 133 137 133 165 26|G 133 137 104 150 58|R 129 155 129 155 23|R 153 172 153 182 23|R 172 186 172 186 18
R 186 219 180 223 33|G 136 218 126 218 58|R 136 193 136 195 26|R 193 323 193 344 133|G 297 321 290 351 65
R 299 303 262 306 51|R 300 308 298 310 8`
}];

// x, y in plot pixels
var ma30 = '0,289 8,286 24,282 41,283 61,287 84,290 100,297 116,304 139,308 163,308 212,308 229,306 261,303 282,302 302,297 331,291 359,294 388,294 424,295 441,297 461,303 490,307 506,311 527,314 543,314 563,310 584,309 604,310 640,311 648,310 660,308 677,303 693,297 709,288 726,273 742,259 767,238 787,223 811,206 836,190 852,178 869,169 885,163 905,158 920,151 926,149 983,149 1011,144 1024,140 1040,138 1052,134 1073,131 1085,127 1097,125 1109,121 1119,120';
var ma60 = '8,317 20,314 41,312 65,308 90,308 118,310 143,308 163,306 180,303 216,297 245,293 269,293 286,295 322,297 335,298 351,301 408,301 449,302 473,304 510,306 535,303 555,302 588,301 612,303 640,303 677,303 693,302 713,297 738,288 762,277 791,265 811,258 824,256 840,250 860,241 877,237 901,230 922,221 946,209 967,198 987,191 1003,183 1024,174 1048,164 1069,153 1081,148 1097,142 1119,140';

var out = [];

function line(x1, y1, x2, y2, color, extra) {
    out.push('<line x1="' + x1 + '" y1="' + y1 + '" x2="' + x2 + '" y2="' + y2 + '" stroke="' + color + '" ' + (extra || '') + '/>');
}

function rect(x, y, w, h, color) {
    out.push('<rect x="' + x + '" y="' + y + '" width="' + w + '" height="' + h + '" fill="' + color + '"/>');
}

function text(x, y, str, anchor, color, size) {
    out.push('<text x="' + x + '" y="' + y + '" text-anchor="' + anchor + '" fill="' + (color || '#6d6f80') + '" font-size="' + (size || 14) + '">' + str + '</text>');
}

function curve(points, color) {
    out.push('<polyline points="' + points + '" fill="none" stroke="' + color + '" stroke-width="1.5" stroke-linejoin="round"/>');
}

// grid and axes
var prices = [64800, 64600, 64400, 64200, 64000, 63800, 63600];
prices.forEach(function (p, i) {
    var y = Math.round(39 + i * 55.6);
    line(0, y, 1194, y, '#1c1d23');
    text(1258, y + 5, (p / 1000).toFixed(3).replace('.', ',') + '.0', 'end');
});
[['2.5K', 476], ['1.5K', 513], ['500', 551]].forEach(function (v) {
    line(0, v[1], 1194, v[1], '#1c1d23');
    text(1203, v[1] + 5, v[0], 'start');
});
['07:30', '09:30', '11:30', '13:30', '15:30', '17:30', '19:30'].forEach(function (t, i) {
    var x = Math.round(124 + i * 171.7);
    line(x, 0, x, 586, '#1c1d23');
    text(x, 603, t, 'middle');
});
line(0, 427, 1280, 427, '#202127');
line(0, 582, 1280, 582, '#202127');
line(1194, 0, 1194, 582, '#202127');

// candles and volume
var index = 0;
var closes = [222, 222, 222, 222, 222, 172, 170, 170, 172].map(function (v) {
    return 209 + v / 3;
});
var lead = closes.length;
blocks.forEach(function (block) {
    block.rows.split(/[|\n]/).forEach(function (row) {
        var c = row.trim().split(' ');
        var up = c[0] === 'G';
        var color = up ? UP : DOWN;
        var v = c.slice(1, 5).map(function (n) {
            return block.base + n / 3;
        });
        var x = FIRST_X + index * STEP;
        line(x, v[2], x, v[3], color);
        rect(x - 3, v[0], 6, Math.max(v[1] - v[0], 1), color);
        rect(x - 2.5, VOL_BASE - c[5] / 3, 5, c[5] / 3, up ? '#176b50' : '#802f34');
        closes.push(up ? v[0] : v[1]);
        index++;
    });
});

function average(n) {
    var points = [];
    for (var i = lead; i < closes.length; i++) {
        var sum = 0;
        for (var j = 0; j < n; j++) {
            sum += closes[i - j];
        }
        points.push((FIRST_X + (i - lead) * STEP).toFixed(1) + ',' + (sum / n).toFixed(1));
    }
    return points.join(' ');
}

curve(average(5), '#e08b0b');
curve(average(10), '#8250ae');
curve(ma30, '#1a6fd8');
curve(ma60, '#c71f62');

// highest price
text(1006, 62, '64,705.2', 'end', '#8a8c9c', 12);
out.push('<path d="M1013 58h6v6M1017 62l2 3 2-3" fill="none" stroke="#8a8c9c"/>');

// last price
line(0, 141.5, 1194, 141.5, '#a52c3c', 'stroke-dasharray="1 1"');
out.push('<rect x="1193" y="130" width="65" height="24" rx="2" fill="#f92855"/>');
text(1253, 147, '64,431.6', 'end', '#fff');

document.getElementById('kline').innerHTML = out.join('');
```
